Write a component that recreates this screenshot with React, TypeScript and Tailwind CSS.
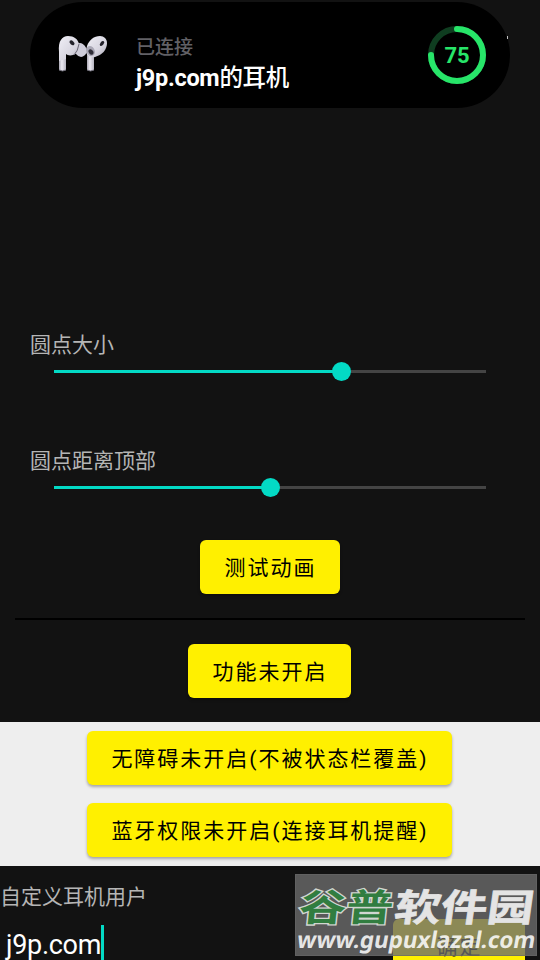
import { useState } from "react";

interface SettingSliderProps {
  label: string;
  initialValue: number;
}

function SettingSlider({ label, initialValue }: SettingSliderProps) {
  const [value] = useState(initialValue);

  return (
    <div className="h-[60px]">
      <div className="pl-[30px] text-[21px] leading-[28px] text-[#b5b5b5]">{label}</div>
      <div className="mx-[54px] mt-[3px] flex h-[19px] items-center">
        <div className="h-[3px] bg-[#03dac5]" style={{ width: `${value}%` }} />
        <div className="z-10 -mx-[9px] size-[19px] shrink-0 rounded-full bg-[#03dac5]" />
        <div className="h-[3px] flex-1 bg-[#444444]" />
      </div>
    </div>
  );
}

interface ActionButtonProps {
  label: string;
  className: string;
}

function ActionButton({ label, className }: ActionButtonProps) {
  return (
    <button
      type="button"
      className={`flex h-[54px] shrink-0 items-center justify-center whitespace-nowrap rounded-[6px] bg-[#fff000] pl-px pt-[3px] text-[21px] font-normal tracking-[1.98px] text-black shadow-[0_2px_3px_rgba(0,0,0,0.3)] ${className}`}
    >
      {label}
    </button>
  );
}

function Earbuds() {
  return (
    <svg width="50" height="38" viewBox="0 0 50 38" className="shrink-0">
      <defs>
        <linearGradient id="bud" x1="0" y1="0" x2="1" y2="1">
          <stop offset="0" stopColor="#f0eff6" />
          <stop offset="0.65" stopColor="#d6d4df" />
          <stop offset="1" stopColor="#a3a1ae" />
        </linearGradient>
        <linearGradient id="stem" x1="0" y1="0" x2="1" y2="0">
          <stop offset="0" stopColor="#aaa8b4" />
          <stop offset="0.4" stopColor="#eceaf2" />
          <stop offset="1" stopColor="#b5b3bf" />
        </linearGradient>
      </defs>
      <ellipse cx="22.5" cy="15" rx="6" ry="7" transform="rotate(-20 22.5 15)" fill="#cfcdda" />
      <path d="M1 12h7v23q-3.5 2-7 0z" fill="url(#stem)" />
      <path d="M1 17C0 6 4 1 10 1c6 0 10 3 11 8 0 6-2 10-6 11-3 1-6 0-7-1V24L1 26z" fill="url(#bud)" />
      <path d="M21 9q-1 7-5 11" fill="none" stroke="#6c6978" strokeWidth="1" />
      <ellipse cx="14" cy="7.8" rx="1.9" ry="2.9" transform="rotate(-48 14 7.8)" fill="#22212a" />
      <path d="M29 18h7v17q-3.5 2-7 0z" fill="url(#stem)" />
      <path d="M29 11C31 5 36 1 42 1c4 0 7 3 7 7 0 7-5 12-12 14-5 1-9-2-9-6z" fill="url(#bud)" />
      <ellipse cx="32.5" cy="16" rx="4.2" ry="5.2" transform="rotate(-30 32.5 16)" fill="#a9a7b5" />
      <ellipse cx="33" cy="17" rx="2.2" ry="2.9" transform="rotate(-35 33 17)" fill="#302e38" />
      <ellipse cx="44" cy="8.5" rx="1.7" ry="2.8" transform="rotate(40 44 8.5)" fill="#22212a" />
      <path d="M1 35q3.5 2 7 0M29 35q3.5 2 7 0" fill="none" stroke="#6d6b76" />
    </svg>
  );
}

function BatteryRing({ percent }: { percent: number }) {
  return (
    <svg width="60" height="60" viewBox="0 0 60 60" className="shrink-0">
      <circle cx="30" cy="30" r="26" fill="none" stroke="#0f3d20" strokeWidth="6" />
      <circle
        cx="30"
        cy="30"
        r="26"
        fill="none"
        stroke="#27e569"
        strokeWidth="6"
        strokeLinecap="round"
        pathLength="100"
        strokeDasharray={`${percent} 100`}
        transform="rotate(-90 30 30)"
      />
      <text x="30" y="38" textAnchor="middle" fontSize="22" fontWeight="700" fill="#27e569">
        {percent}
      </text>
    </svg>
  );
}

function ConnectionBanner() {
  return (
    <header className="relative mx-[30px] mt-[2px] flex h-[106px] shrink-0 rounded-[53px] bg-black">
      {/* sliver of the status bar clock behind the banner */}
      <div className="absolute left-[477px] top-[34px] h-[3px] w-px bg-[#c0c0c0]" />
      <div className="ml-[28px] mt-[33px]">
        <Earbuds />
      </div>
      <div className="ml-[28px] mt-[32px] whitespace-nowrap">
        <div className="text-[19px] font-medium leading-[28px] text-[#626166]">已连接</div>
        <div className="mt-px text-[23.5px] font-bold leading-[30px] tracking-[-0.3px] text-white">
          j9p.com<span className="font-medium">的耳机</span>
        </div>
      </div>
      <div className="ml-auto mr-[23px] mt-[23px]">
        <BatteryRing percent={75} />
      </div>
    </header>
  );
}

function Watermark() {
  return (
    <div className="absolute left-[295px] top-[8px] h-[82px] w-[242px] border border-[#686868]/60 bg-[#6d6d6d]/79">
      <svg width="240" height="80" viewBox="0 0 240 80" className="block">
        <g fontFamily="'Noto Sans CJK SC', sans-serif" fontSize="44">
          <text
            transform="translate(0 46) skewX(-6) scale(1 .85)"
            textLength="94"
            lengthAdjust="spacingAndGlyphs"
            x="2"
            fontWeight="700"
            fill="#317d40"
            stroke="#d1d6d1"
            strokeWidth="3"
            paintOrder="stroke"
          >
            谷普
          </text>
          <text
            transform="translate(0 46) skewX(-8) scale(1 .85)"
            textLength="139"
            lengthAdjust="spacingAndGlyphs"
            x="97"
            fontWeight="700"
            fill="#e4e4e4"
            stroke="#e4e4e4"
            strokeWidth="0.8"
          >
            软件园
          </text>
        </g>
        <text
          transform="translate(0 73) skewX(-10)"
          x="0"
          y="0"
          textLength="238"
          lengthAdjust="spacingAndGlyphs"
          fontFamily="'Noto Sans', sans-serif"
          fontSize="23"
          fontWeight="700"
          fill="#ffffff"
          fillOpacity="0.86"
        >
          www.gupuxlazal.com
        </text>
      </svg>
    </div>
  );
}

export default function App() {
  return (
    <div
      lang="zh-CN"
      className="flex h-[960px] w-[540px] flex-col overflow-hidden bg-[#121212] font-[Roboto,'Noto_Sans_CJK_SC',sans-serif]"
    >
      <ConnectionBanner />

      <main className="mt-[223px] flex shrink-0 flex-col">
        <SettingSlider label="圆点大小" initialValue={66.5} />
        <div className="mt-[56px]">
          <SettingSlider label="圆点距离顶部" initialValue={50} />
        </div>
        <ActionButton label="测试动画" className="ml-[200px] mt-[33px] w-[140px]" />
        <div className="mx-[15px] mt-[24px] h-[2px] shrink-0 bg-black" />
        <ActionButton label="功能未开启" className="ml-[188px] mt-[24px] w-[163px]" />
      </main>

      <section className="mt-[24px] flex h-[144px] shrink-0 flex-col gap-[18px] bg-[#eeeeee] pl-[87px] pt-[9px]">
        <ActionButton label="无障碍未开启(不被状态栏覆盖)" className="w-[365px]" />
        <ActionButton label="蓝牙权限未开启(连接耳机提醒)" className="w-[365px]" />
      </section>

      <footer className="relative h-[94px] shrink-0 overflow-hidden">
        <div className="pt-[17px] text-[21px] leading-[28px] text-[#b5b5b5]">自定义耳机用户</div>
        <div className="flex">
          <div className="mt-[14px] flex h-[36px] items-center pl-[6px] text-[27px] tracking-[-0.3px] text-white">
            <span className="pt-[4px]">j9p.com</span>
            <span className="h-[36px] w-[3px] bg-[#03dac5]" />
          </div>
          <ActionButton label="确定" className="ml-auto mr-[15px] mt-[8px] w-[132px]" />
        </div>
        <Watermark />
      </footer>
    </div>
  );
}
